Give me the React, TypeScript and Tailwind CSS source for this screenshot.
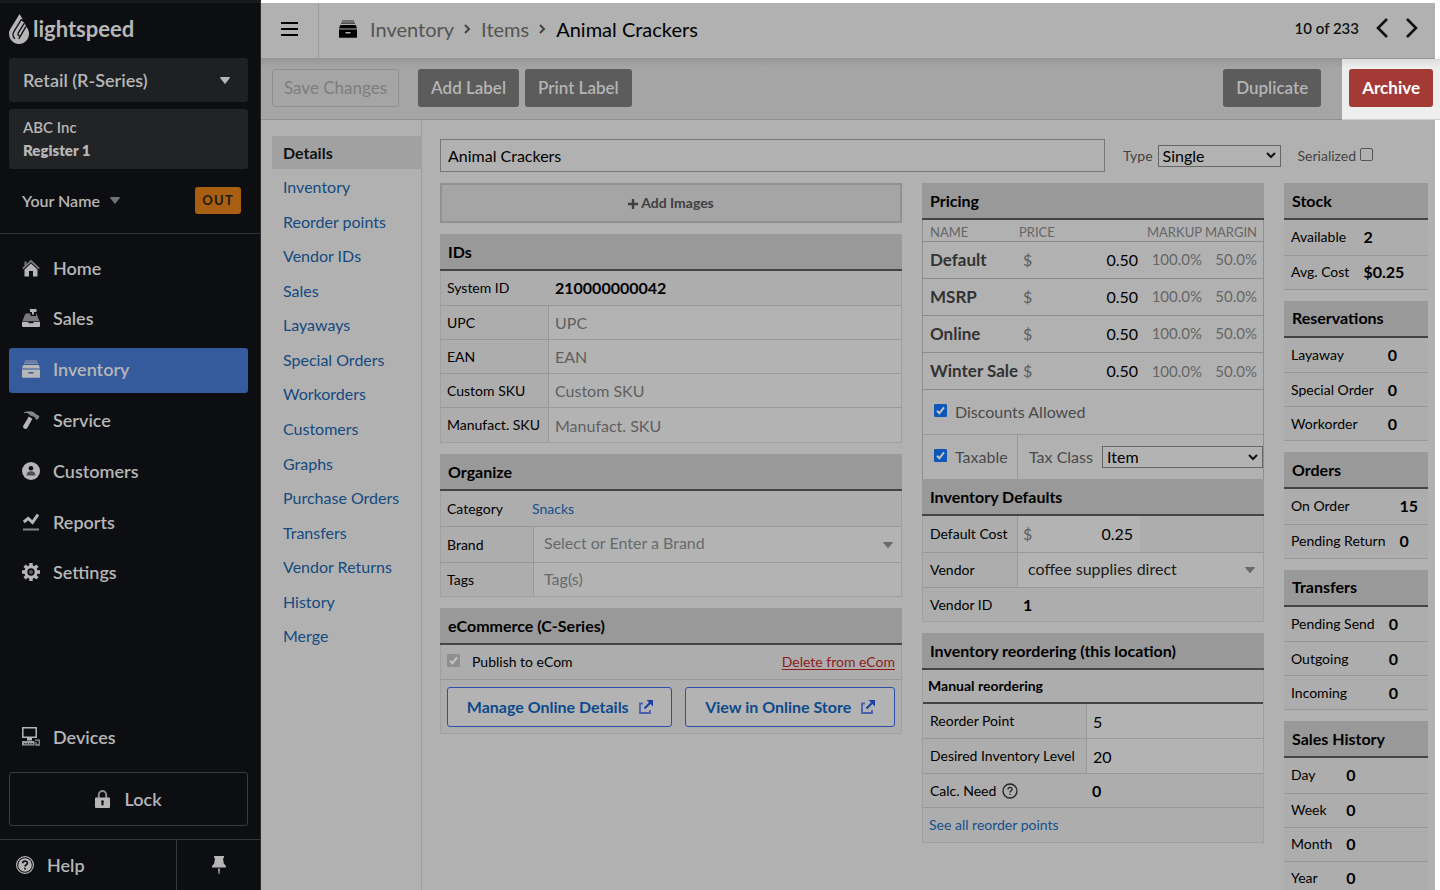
import type { ReactNode } from "react";
import { clsx } from "clsx";

const primaryNav = [
  { label: "Home", icon: <HomeIcon /> },
  { label: "Sales", icon: <RegisterIcon /> },
  { label: "Inventory", icon: <DrawerIcon />, active: true },
  { label: "Service", icon: <HammerIcon /> },
  { label: "Customers", icon: <CustomerIcon /> },
  { label: "Reports", icon: <ReportsIcon /> },
  { label: "Settings", icon: <GearIcon /> },
];

const itemTabs = [
  "Details",
  "Inventory",
  "Reorder points",
  "Vendor IDs",
  "Sales",
  "Layaways",
  "Special Orders",
  "Workorders",
  "Customers",
  "Graphs",
  "Purchase Orders",
  "Transfers",
  "Vendor Returns",
  "History",
  "Merge",
];

const prices = ["Default", "MSRP", "Online", "Winter Sale"];

const stats: { title: string; rows: [string, string][] }[] = [
  { title: "Stock", rows: [["Available", "2"], ["Avg. Cost", "$0.25"]] },
  { title: "Reservations", rows: [["Layaway", "0"], ["Special Order", "0"], ["Workorder", "0"]] },
  { title: "Orders", rows: [["On Order", "15"], ["Pending Return", "0"]] },
  { title: "Transfers", rows: [["Pending Send", "0"], ["Outgoing", "0"], ["Incoming", "0"]] },
  { title: "Sales History", rows: [["Day", "0"], ["Week", "0"], ["Month", "0"], ["Year", "0"]] },
];

export default function App() {
  return (
    <div className="flex h-screen overflow-hidden bg-white font-[Lato,sans-serif] text-sm text-black">
      <Sidebar />
      <div className="flex min-w-0 flex-1 flex-col pt-[3px]">
        <Header />
        <Toolbar />
        <div className="mr-[5px] flex min-h-0 flex-1 overflow-hidden bg-[#b1b1b1]">
          <ItemTabs />
          <main className="min-w-0 flex-1 pt-[19px] pr-[7px] pl-[18px]">
            <ItemTitle />
            <div className="mt-[11px] grid grid-cols-[minmax(0,462fr)_minmax(0,342fr)_minmax(0,144fr)] gap-5">
              <div className="flex flex-col gap-[11px]">
                <button className="h-10 border-2 border-[#919191] bg-[#a5a5a5] text-sm font-bold text-[#3f3f3f]">
                  <PlusIcon /> Add Images
                </button>
                <IdsPanel />
                <OrganizePanel />
                <EcommercePanel />
              </div>
              <div className="flex flex-col gap-[11px]">
                <PricingPanel />
                <ReorderPanel />
              </div>
              <div className="flex flex-col gap-[11px]">
                {stats.map((stat) => (
                  <StatPanel key={stat.title} title={stat.title} rows={stat.rows} />
                ))}
              </div>
            </div>
          </main>
        </div>
      </div>
    </div>
  );
}

function Sidebar() {
  return (
    <aside className="flex w-[261px] shrink-0 flex-col border-t-[3px] border-r border-t-[#191a1e] border-r-[#2a2b2e] bg-[#0d0e12] text-[#b6b6b6]">
      <a href="#" className="mt-[11px] ml-[9px] flex items-center gap-1" aria-label="lightspeed">
        <FlameLogo />
        <span className="text-[22px] leading-[30px] font-bold">lightspeed</span>
      </a>
      <button className="mt-3.5 mr-3 ml-[9px] flex h-11 items-center justify-between rounded-[3px] bg-[#1d2123] px-3.5 text-lg font-semibold">
        Retail (R-Series)
        <Caret className="mr-1 h-[7px] w-2.5" />
      </button>
      <div className="mt-[7px] mr-3 ml-[9px] h-[60px] rounded-[3px] bg-[#222325] px-3.5 pt-[7px] text-[15px] leading-[23px]">
        <p className="font-semibold">ABC Inc</p>
        <p className="font-extrabold">Register 1</p>
      </div>
      <div className="mt-[18px] flex items-center justify-between pr-[19px] pl-[22px]">
        <button className="flex items-center gap-2.5 text-base font-semibold">
          Your Name
          <Caret className="h-[7px] w-2.5 text-[#707173]" />
        </button>
        <button className="h-[27px] rounded-[3px] bg-[#a85f12] px-[7px] text-[13px] font-bold tracking-widest text-[#1d1a16]">
          OUT
        </button>
      </div>
      <nav className="mt-[19px] flex h-[363px] shrink-0 flex-col justify-between border-t border-[#33343a] pt-3 pr-3 pl-[9px]">
        {primaryNav.map((item) => (
          <SidebarLink key={item.label} {...item} />
        ))}
      </nav>
      <div className="mt-auto pr-3 pl-[9px]">
        <SidebarLink label="Devices" icon={<DevicesIcon />} />
        <button className="mt-3 mb-[13px] flex h-[54px] w-full items-center justify-center gap-3.5 rounded-[3px] border border-[#3a3b3f] text-lg font-semibold">
          <LockIcon />
          Lock
        </button>
      </div>
      <div className="flex h-[51px] shrink-0 border-t border-[#37383c]">
        <a href="#" className="flex w-[177px] items-center gap-[13px] border-r border-[#37383c] pl-4 text-lg font-semibold">
          <HelpIcon />
          Help
        </a>
        <button className="flex flex-1 items-center justify-center" aria-label="Pin menu">
          <PinIcon />
        </button>
      </div>
    </aside>
  );
}

function SidebarLink({ label, icon, active }: { label: string; icon: ReactNode; active?: boolean }) {
  return (
    <a
      href="#"
      className={clsx(
        "flex h-[45px] items-center gap-[13px] rounded-[3px] pb-0.5 pl-[13px] text-lg font-semibold",
        active && "bg-[#365b9d]",
      )}
    >
      {icon}
      {label}
    </a>
  );
}

function Header() {
  return (
    <header className="mr-[5px] flex h-14 shrink-0 items-center border-b border-[#979797] bg-[#b1b1b1]">
      <button className="flex h-full w-[58px] items-center justify-center border-r border-[#9b9b9b] pb-1" aria-label="Menu">
        <svg viewBox="0 0 17 14" className="h-3.5 w-[17px]" stroke="currentColor" strokeWidth="2">
          <path d="M0 1h17M0 7h17M0 13h17" />
        </svg>
      </button>
      <nav className="flex items-center pb-1 pl-5 text-xl text-[#555]" aria-label="Breadcrumb">
        <span className="mr-[13px] text-black">
          <DrawerIcon />
        </span>
        <a href="#">Inventory</a>
        <Crumb />
        <a href="#">Items</a>
        <Crumb />
        <span className="text-black">Animal Crackers</span>
      </nav>
      <div className="ml-auto flex items-center pr-[17px] pb-1">
        <span className="mr-[17px] text-[15px] font-semibold text-[#111]">10 of 233</span>
        <button aria-label="Previous item" className="mr-[18px]">
          <svg viewBox="0 0 12 20" className="h-5 w-3" fill="none" stroke="#111" strokeWidth="2.6">
            <path d="M11 1 2 10l9 9" />
          </svg>
        </button>
        <button aria-label="Next item">
          <svg viewBox="0 0 12 20" className="h-5 w-3" fill="none" stroke="#111" strokeWidth="2.6">
            <path d="m1 1 9 9-9 9" />
          </svg>
        </button>
      </div>
    </header>
  );
}

function Crumb() {
  return (
    <svg viewBox="0 0 7 10" className="mx-2.5 h-2.5 w-[7px]" fill="none" stroke="#444" strokeWidth="2">
      <path d="m1 1 4 4-4 4" />
    </svg>
  );
}

function Toolbar() {
  const button = "h-[38px] rounded-[3px] bg-[#5c5c5c] px-[13px] font-semibold text-[#b4b4b4]";
  return (
    <div className="flex h-[61px] shrink-0 text-[17px]">
      <div className="flex flex-1 items-center border-b border-[#8f8f8f] bg-linear-to-b from-[#999] from-0% to-[#a5a5a5] to-15% pr-[21px] pb-0.5 pl-[11px]">
        <button className="h-[38px] rounded-[3px] border border-[#8f8f8f] px-[11px] text-[#7d7d7d]" disabled>
          Save Changes
        </button>
        <button className={clsx(button, "ml-[19px]")}>Add Label</button>
        <button className={clsx(button, "ml-1.5")}>Print Label</button>
        <button className={clsx(button, "ml-auto")}>Duplicate</button>
      </div>
      <div className="flex items-center border-b border-[#d0d0d0] bg-linear-to-b from-[#dcdcdc] from-0% to-[#eee] to-15% px-[7px] pb-0.5">
        <button className="h-[38px] rounded-[3px] bg-[#a43a36] px-[13px] font-bold text-white">Archive</button>
      </div>
    </div>
  );
}

function ItemTabs() {
  return (
    <nav className="w-[161px] shrink-0 border-r border-[#a0a0a0] pt-4 pl-[11px]">
      <ul className="flex h-[517px] flex-col justify-between text-base">
        {itemTabs.map((tab) => (
          <li key={tab}>
            <a
              href="#"
              className={clsx(
                "flex h-[33px] items-center pl-[11px]",
                tab === "Details" ? "bg-[#a1a1a1] font-bold text-[#111]" : "text-[#154a80]",
              )}
            >
              {tab}
            </a>
          </li>
        ))}
      </ul>
    </nav>
  );
}

function ItemTitle() {
  return (
    <div className="flex h-[33px] items-center text-[#444]">
      <input
        aria-label="Item name"
        defaultValue="Animal Crackers"
        className="h-full min-w-0 flex-1 border border-[#777] px-[7px] text-base text-black"
      />
      <label htmlFor="type" className="ml-[18px]">
        Type
      </label>
      <Select id="type" value="Single" className="ml-[5px] w-[123px]" />
      <label className="ml-[17px] flex items-center gap-1">
        Serialized
        <Checkbox />
      </label>
      <span className="w-[55px]" />
    </div>
  );
}

function Select({ id, value, className }: { id: string; value: string; className: string }) {
  return (
    <span className={clsx("relative flex h-[22px] items-center", className)}>
      <select id={id} className="h-full w-full appearance-none border border-[#666] bg-[#b3b3b3] pl-1 text-base leading-5 text-black">
        <option>{value}</option>
      </select>
      <svg viewBox="0 0 10 7" className="pointer-events-none absolute right-[5px] h-[7px] w-2.5" fill="none" stroke="#111" strokeWidth="2">
        <path d="m1 1 4 4 4-4" />
      </svg>
    </span>
  );
}

function Checkbox({ checked, disabled }: { checked?: boolean; disabled?: boolean }) {
  return (
    <span className="relative mb-[3px] flex size-[13px] shrink-0">
      <input
        type="checkbox"
        defaultChecked={checked}
        disabled={disabled}
        className="peer size-[13px] appearance-none rounded-[2px] border border-[#555] checked:rounded-[1px] checked:border-[#0c57b8] checked:bg-[#0c57b8] disabled:border-[#8f8f8f] disabled:bg-[#8f8f8f]"
      />
      <svg
        viewBox="0 0 13 13"
        className="pointer-events-none absolute inset-0 hidden size-[13px] text-[#c4c4c4] peer-checked:block"
        fill="none"
        stroke="currentColor"
        strokeWidth="2"
      >
        <path d="m3 6.8 2.4 2.5L10 3.4" />
      </svg>
    </span>
  );
}

function Panel({ title, children }: { title: string; children: ReactNode }) {
  return (
    <section>
      <PanelTitle>{title}</PanelTitle>
      {children}
    </section>
  );
}

function PanelTitle({ children }: { children: ReactNode }) {
  return (
    <h2 className="flex h-[37px] items-center border-b-2 border-[#444] bg-[#999] pl-2 text-base font-bold">
      {children}
    </h2>
  );
}

function IdsPanel() {
  return (
    <Panel title="IDs">
      <div className="border-x border-b border-[#a0a0a0] bg-[#adadad]">
        <div className="flex h-[35px] items-center border-b border-[#989898] pl-1.5">
          <span className="w-[108px]">System ID</span>
          <strong className="text-base">210000000042</strong>
        </div>
        {["UPC", "EAN", "Custom SKU", "Manufact. SKU"].map((name) => (
          <div key={name} className="flex h-[34px] items-center border-b border-[#989898] last:border-b-0">
            <label htmlFor={name} className="w-[107px] pl-1.5">
              {name}
            </label>
            <input
              id={name}
              placeholder={name}
              className="h-full min-w-0 flex-1 border-l border-[#989898] bg-[#b3b3b3] px-1.5 text-base placeholder:text-[#5f5f5f]"
            />
          </div>
        ))}
      </div>
    </Panel>
  );
}

function OrganizePanel() {
  return (
    <Panel title="Organize">
      <div className="border-x border-b border-[#a0a0a0] bg-[#adadad]">
        <div className="flex h-[35px] items-center pl-1.5">
          <span className="w-[85px]">Category</span>
          <a href="#" className="text-[#14508c]">
            Snacks
          </a>
        </div>
        <div className="flex h-9 items-center border-t border-[#989898]">
          <label htmlFor="brand" className="w-[92px] pl-1.5">
            Brand
          </label>
          <div className="relative flex h-full flex-1 items-center border-l border-[#989898] bg-[#b3b3b3]">
            <input id="brand" placeholder="Select or Enter a Brand" className="w-full pb-[3px] pl-2.5 text-base placeholder:text-[#666a6e]" />
            <Caret className="absolute right-2 h-1.5 w-2.5 text-[#666a6e]" />
          </div>
        </div>
        <div className="flex h-[34px] items-center border-t border-[#989898]">
          <label htmlFor="tags" className="w-[92px] pl-1.5">
            Tags
          </label>
          <input
            id="tags"
            placeholder="Tag(s)"
            className="h-full min-w-0 flex-1 border-l border-[#989898] bg-[#b3b3b3] pb-[3px] pl-2.5 text-base placeholder:text-[#666a6e]"
          />
        </div>
      </div>
    </Panel>
  );
}

function EcommercePanel() {
  const button =
    "flex h-10 items-center justify-center gap-2.5 rounded-[3px] border border-[#2c50a8] bg-[#b3b3b3] text-base font-bold text-[#0d4a8c]";
  return (
    <Panel title="eCommerce (C-Series)">
      <div className="border-x border-b border-[#a0a0a0] bg-[#adadad]">
        <div className="flex h-[35px] items-center justify-between border-b border-[#989898] px-1.5">
          <label className="flex items-center gap-3">
            <Checkbox checked disabled />
            Publish to eCom
          </label>
          <a href="#" className="text-[#8c1d1b] underline underline-offset-2">
            Delete from eCom
          </a>
        </div>
        <div className="flex h-[53px] items-center gap-[13px] px-1.5">
          <button className={clsx(button, "flex-[226]")}>
            Manage Online Details
            <ExternalIcon />
          </button>
          <button className={clsx(button, "flex-[210]")}>
            View in Online Store
            <ExternalIcon />
          </button>
        </div>
      </div>
    </Panel>
  );
}

function PricingPanel() {
  return (
    <Panel title="Pricing">
      <div className="border-x border-[#8f8f8f]">
        <table className="w-full table-fixed">
          <thead>
            <tr className="h-[21px] text-left align-bottom text-[13px] leading-[18px] text-[#666]">
              <th className="w-24 pl-[7px] font-normal">NAME</th>
              <th className="font-normal">PRICE</th>
              <th className="w-16 text-right font-normal">MARKUP</th>
              <th className="w-[61px] pr-1.5 text-right font-normal whitespace-nowrap">MARGIN</th>
            </tr>
          </thead>
          <tbody>
            {prices.map((name) => (
              <tr key={name} className="h-[37px] border-t border-[#8c8c8c] text-base">
                <th className="pl-[7px] text-left text-[17px] leading-6 font-bold whitespace-nowrap text-[#333]">{name}</th>
                <td>
                  <div className="flex items-center pl-1">
                    <span className="text-[#5c5c5c]">$</span>
                    <input aria-label={`${name} price`} defaultValue="0.50" className="w-full min-w-0 text-right" />
                  </div>
                </td>
                <td className="text-right text-[15px] text-[#666]">100.0%</td>
                <td className="pr-1.5 text-right text-[15px] text-[#666]">50.0%</td>
              </tr>
            ))}
          </tbody>
        </table>
        <label className="flex h-[45px] items-center gap-2 border-t border-[#8c8c8c] pl-[11px] text-base text-[#4a4a4a]">
          <Checkbox checked />
          Discounts Allowed
        </label>
        <div className="flex h-[45px] items-center border-t border-[#989898] text-base text-[#4a4a4a]">
          <label className="flex h-full w-[95px] items-center gap-2 border-r border-[#989898] pl-[11px]">
            <Checkbox checked />
            Taxable
          </label>
          <label htmlFor="tax-class" className="w-[84px] pl-[11px]">
            Tax Class
          </label>
          <Select id="tax-class" value="Item" className="flex-1" />
        </div>
      </div>
      <PanelTitle>Inventory Defaults</PanelTitle>
      <div className="border-x border-b border-[#a0a0a0] bg-[#adadad]">
        <div className="flex h-9 items-center">
          <label htmlFor="cost" className="w-[94px] pl-[7px] whitespace-nowrap">
            Default Cost
          </label>
          <div className="flex h-full w-[123px] items-center border-l border-[#989898] bg-[#b3b3b3] pr-[7px] pl-[5px] text-base">
            <span className="text-[#5c5c5c]">$</span>
            <input id="cost" defaultValue="0.25" className="w-full min-w-0 text-right" />
          </div>
        </div>
        <div className="flex h-[35px] items-center border-t border-[#989898]">
          <label htmlFor="vendor" className="w-[94px] pl-[7px]">
            Vendor
          </label>
          <div className="relative flex h-full flex-1 items-center border-l border-[#989898] bg-[#b3b3b3]">
            <input id="vendor" defaultValue="coffee supplies direct" className="w-full pb-[3px] pl-2.5 text-base text-[#1c1c1c]" />
            <Caret className="absolute right-2 h-1.5 w-2.5 text-[#666a6e]" />
          </div>
        </div>
        <div className="flex h-[34px] items-center border-t border-[#989898] pl-[7px]">
          <span className="w-[93px]">Vendor ID</span>
          <strong className="text-base">1</strong>
        </div>
      </div>
    </Panel>
  );
}

function ReorderPanel() {
  return (
    <Panel title="Inventory reordering (this location)">
      <div className="border-x border-b border-[#a0a0a0] bg-[#adadad]">
        <h3 className="flex h-[34px] items-center border-b-2 border-[#444] pl-[5px] text-sm font-bold">Manual reordering</h3>
        {[
          ["Reorder Point", "5"],
          ["Desired Inventory Level", "20"],
        ].map(([label, value]) => (
          <div key={label} className="flex h-[35px] items-center border-b border-[#989898]">
            <label htmlFor={label} className="w-[163px] pl-[7px] whitespace-nowrap">
              {label}
            </label>
            <input
              id={label}
              defaultValue={value}
              className="h-full min-w-0 flex-1 border-l border-[#989898] bg-[#b3b3b3] px-1.5 text-base"
            />
          </div>
        ))}
        <div className="flex h-[34px] items-center border-b border-[#989898] pl-[7px]">
          <span className="flex w-[162px] items-center gap-1.5">
            Calc. Need
            <svg viewBox="0 0 16 16" className="size-4" fill="none" stroke="#222" strokeWidth="1.3">
              <circle cx="8" cy="8" r="7" />
              <path d="M6 6.400c0-2.700 4.100-2.600 4.100-.2C10.100 7.700 8 7.700 8 9.400M8 10.700v1.400" />
            </svg>
          </span>
          <strong className="text-base">0</strong>
        </div>
        <a href="#" className="flex h-[34px] items-center pl-1.5 text-[#14508c]">
          See all reorder points
        </a>
      </div>
    </Panel>
  );
}

function StatPanel({ title, rows }: { title: string; rows: [string, string][] }) {
  return (
    <Panel title={title}>
      <table className="w-full border-b border-[#989898] bg-[#adadad]">
        <tbody>
          {rows.map(([label, value]) => (
            <tr key={label} className="h-[34px] border-b border-[#989898] first:h-[35px]">
              <th className="w-px px-[7px] text-left font-normal whitespace-nowrap">{label}</th>
              <td className="pl-[7px] text-base font-bold">{value}</td>
            </tr>
          ))}
        </tbody>
      </table>
    </Panel>
  );
}

function Caret({ className }: { className?: string }) {
  return (
    <svg viewBox="0 0 10 7" className={className} fill="currentColor" preserveAspectRatio="none">
      <path d="M.6 0h8.800c.5 0 .7.500.400.900L5.500 6.600c-.3.400-.7.400-1 0L.2.900C-.1.500.1 0 .6 0Z" />
    </svg>
  );
}

function PlusIcon() {
  return (
    <svg viewBox="0 0 10 10" className="inline size-2.5" stroke="currentColor" strokeWidth="2.4">
      <path d="M5 0v10M0 5h10" />
    </svg>
  );
}

function FlameLogo() {
  return (
    <svg viewBox="0 0 20 30" className="h-[30px] w-5">
      <path
        d="M10.600 0 1.800 14.200C.4 16.500 0 18 0 19.800 0 25.600 4.500 30 10 30s10-4.400 10-10.200c0-1.900-.5-3.500-1.500-5.200L14.600 8l-2.100-1.200 1-1.800Z"
        fill="currentColor"
      />
      <path
        d="M12.600 5.200 4.900 17.700c-1.500 2.500-.9 5.400 1 7.100M15.200 9.300 9.300 18.800c-.9 1.600.1 2.900 1.300 2.900M17 12.400l-7.200 12.400"
        fill="none"
        stroke="#0d0e12"
        strokeWidth="1.300"
      />
    </svg>
  );
}

function HomeIcon() {
  return (
    <svg viewBox="0 0 18 18" className="size-[18px]" fill="currentColor">
      <path d="M9 .8 17.800 9l-1.200 1.200L9 3.200l-7.600 7L.2 9 2.500 6.800V2.500h2v2.500Z" opacity=".65" />
      <path d="m9 4.600 6.500 6V17.500H11v-5.500H7v5.500H2.500v-6.900Z" />
    </svg>
  );
}

function RegisterIcon() {
  return (
    <svg viewBox="0 0 18 18" className="size-[18px]" fill="currentColor">
      <path d="M4 4.500h4.500V7H14V4.500h.5L17.500 12H.5L3 5.500Z" opacity=".65" />
      <path d="M8 0h6.500v3H12v2.500h-2V3H8ZM0 12.800h18V17a1 1 0 0 1-1 1H1a1 1 0 0 1-1-1Z" />
      <path d="M6.500 12.800h5v1.400h-5z" fill="#0d0e12" />
    </svg>
  );
}

function DrawerIcon() {
  return (
    <svg viewBox="0 0 18 18" className="size-[18px]" fill="currentColor">
      <path d="M3 .5h12v1H3ZM2 2.600h14v1.200H2Z" opacity=".75" />
      <path d="M1.200 5h15.600L18 8.500H0ZM0 9.400h18V17a.8.800 0 0 1-.8.800H.8A.8.800 0 0 1 0 17ZM6.500 12v1.500h5V12Z" fillRule="evenodd" />
    </svg>
  );
}

function HammerIcon() {
  return (
    <svg viewBox="0 0 18 18" className="size-[18px]" fill="currentColor">
      <path d="M2 1.200C6-.2 10.500-.3 13 2.200c1 1 1.800 1.700 3 1.700l1.500 1.800-2.200 3.300-2-1c0-1.600-.8-2.400-2.300-2.400L8 4.200C6.500 2.300 4.500 1.800 2 2.200Z" opacity=".7" />
      <path d="m6.800 5.400 3.600 2.300L5.300 17c-.6 1.100-2.200 1.100-3.200.5-1-.6-1.300-1.900-.8-2.800Z" />
    </svg>
  );
}

function CustomerIcon() {
  return (
    <svg viewBox="0 0 18 18" className="size-[18px]">
      <circle cx="9" cy="9" r="9" fill="currentColor" />
      <circle cx="9" cy="6.300" r="2.300" fill="#0d0e12" />
      <path d="M4.600 13.600c0-3 1.400-4.400 4.400-4.400s4.400 1.400 4.400 4.400Z" fill="#4d4f55" />
    </svg>
  );
}

function ReportsIcon() {
  return (
    <svg viewBox="0 0 18 18" className="size-[18px]" fill="none" stroke="currentColor">
      <path d="m1.800 9 4.400-3.600 4.300 4L16 1.500" strokeWidth="3" />
      <path d="M1 16.500h16" strokeWidth="2" opacity=".7" />
    </svg>
  );
}

function GearIcon() {
  return (
    <svg viewBox="0 0 18 18" className="size-[18px]" fill="none" stroke="currentColor">
      <circle cx="9" cy="9" r="5.200" strokeWidth="3" />
      <circle cx="9" cy="9" r="2" fill="currentColor" stroke="none" opacity=".45" />
      <path
        d="M9 0v3M9 15v3M0 9h3M15 9h3M2.600 2.600l2.200 2.200M13.200 13.200l2.200 2.200M2.600 15.400l2.200-2.200M13.200 4.800l2.200-2.200"
        strokeWidth="3.400"
      />
    </svg>
  );
}

function DevicesIcon() {
  return (
    <svg viewBox="0 0 18 19" className="h-[19px] w-[18px]" fill="none" stroke="currentColor">
      <path d="M.8.8h13.400v9.400H.8Z" strokeWidth="1.500" />
      <path d="M5 11h5v2.500H5Z" fill="currentColor" stroke="none" />
      <path d="M0 14h12.500v4.500H0Z" fill="currentColor" stroke="none" opacity=".85" />
      <path d="M2 16.800h9" stroke="#0d0e12" strokeDasharray="1.500 1" />
      <path d="M13 13.200h4.200v4.800H14v-3" strokeWidth="1.300" opacity=".8" />
    </svg>
  );
}

function LockIcon() {
  return (
    <svg viewBox="0 0 15 18" className="h-[18px] w-[15px]">
      <path d="M3.800 8V4.700a3.700 3.700 0 0 1 7.400 0V8" fill="none" stroke="currentColor" strokeWidth="2" opacity=".75" />
      <path d="M1 7.500h13a1 1 0 0 1 1 1V17a1 1 0 0 1-1 1H1a1 1 0 0 1-1-1V8.500a1 1 0 0 1 1-1Z" fill="currentColor" />
      <path d="M7.500 10.200a1.500 1.500 0 0 1 .8 2.700l.5 2.300H6.200l.5-2.300a1.500 1.500 0 0 1 .8-2.700Z" fill="#0d0e12" />
    </svg>
  );
}

function HelpIcon() {
  return (
    <svg viewBox="0 0 18 18" className="size-[18px]">
      <circle cx="9" cy="9" r="8.400" fill="none" stroke="currentColor" strokeWidth="1.200" />
      <circle cx="9" cy="9" r="6.800" fill="currentColor" />
      <path d="M6.600 7.300c0-3 4.900-2.900 4.900-.2C11.500 8.800 9 8.700 9 10.500M9 11.700v1.800" fill="none" stroke="#0d0e12" strokeWidth="1.700" />
    </svg>
  );
}

function PinIcon() {
  return (
    <svg viewBox="0 0 14 18" className="h-[18px] w-3.5" fill="currentColor">
      <path d="M2 0h10v1.600l-1 .8.900 5.600c1.300.500 2.100 1.600 2.100 3.500H0C0 9.600.8 8.500 2.100 8L3 2.400l-1-.8Z" />
      <path d="M5.800 12.500h2.400L7.500 18h-1Z" opacity=".8" />
    </svg>
  );
}

function ExternalIcon() {
  return (
    <svg viewBox="0 0 14 14" className="size-3.5" fill="none" stroke="#1c3fa8" strokeWidth="1.800">
      <path d="M4 3.500H1V13h10v-3" opacity=".7" />
      <path d="m5.500 8.500 6-6" strokeWidth="2.200" />
      <path d="M7.500 0H14v6.500l-2.200-2.200-2.100-2.100Z" fill="#1c3fa8" stroke="none" />
    </svg>
  );
}
